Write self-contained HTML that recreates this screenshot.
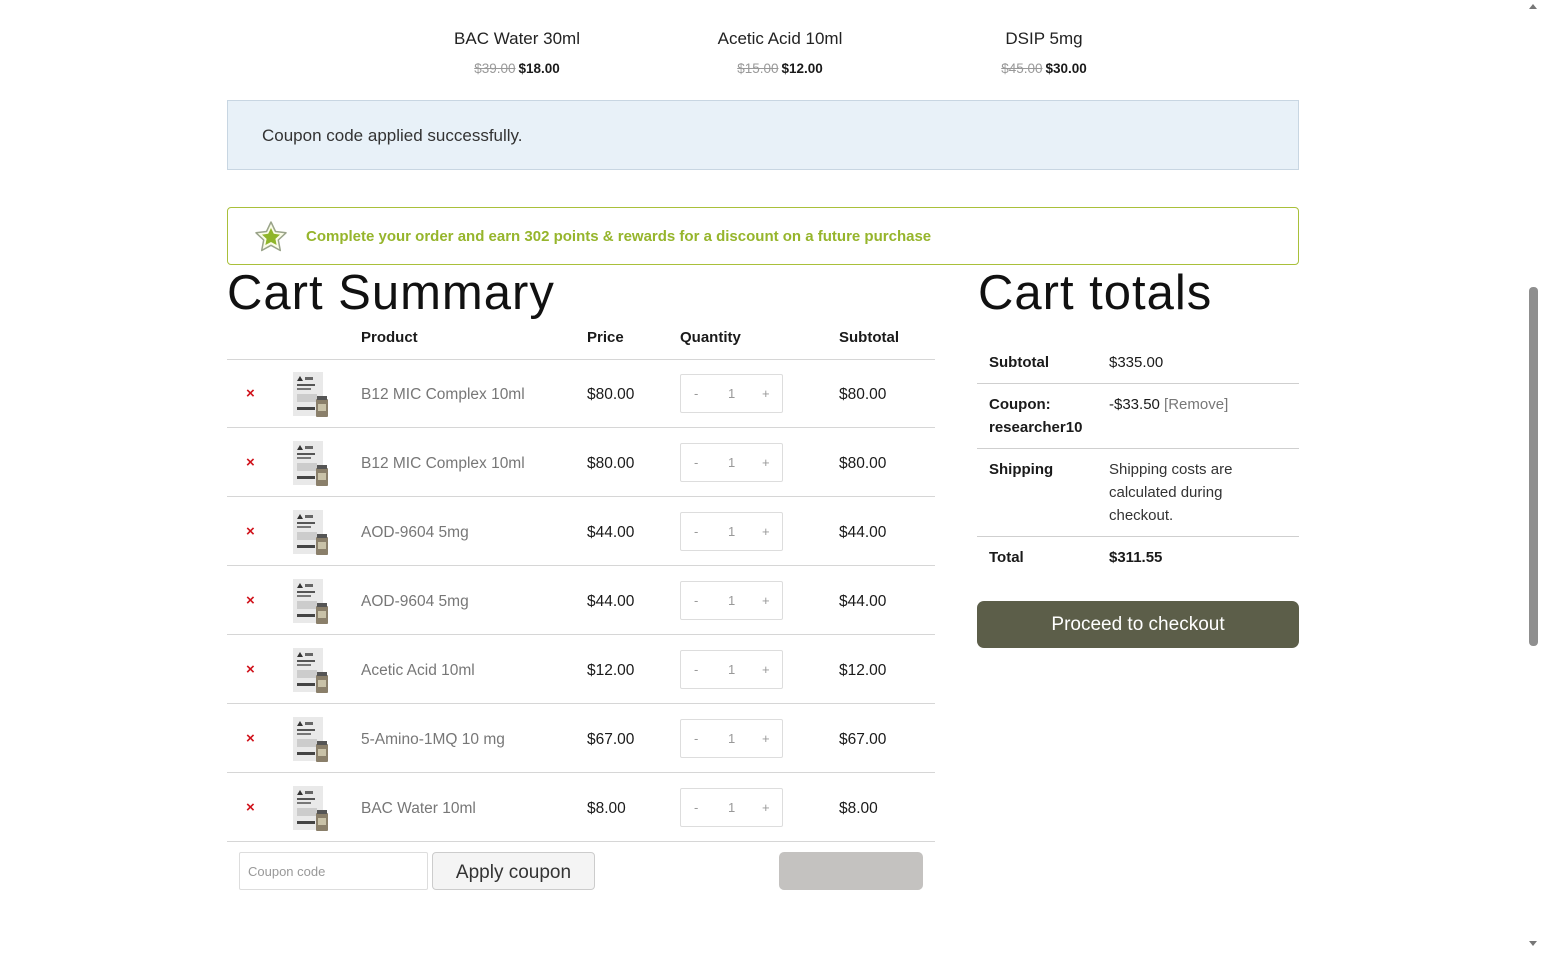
<!DOCTYPE html>
<html><head><meta charset="utf-8">
<style>
*{margin:0;padding:0;box-sizing:border-box}
html,body{width:1541px;height:953px;overflow:hidden;background:#fff;font-family:"Liberation Sans",sans-serif;color:#1a1a1a}
.abs{position:absolute}
.top{font-size:17px;color:#222;text-align:center;width:200px}
.pr{font-size:13.5px;text-align:center;width:200px;font-weight:bold}
.pr s{color:#999;font-weight:normal;margin-right:3px}
.notice{left:227px;top:100px;width:1072px;height:70px;background:#e8f1f8;border:1px solid #c8d6e2;font-size:17px;color:#333;padding:25px 34px}
.rew{left:227px;top:207px;width:1072px;height:58px;border:1px solid #a9c03a;border-radius:4px}
.rew span{position:absolute;left:78px;top:20px;color:#96b52c;font-weight:bold;font-size:15px}
h1{position:absolute;font-weight:normal;font-size:49px;color:#111;letter-spacing:1px}
.th{font-weight:bold;font-size:15px;top:329px}
.line{height:1px;background:#d6d6d6;left:227px;width:708px}
.row{position:absolute;left:227px;width:708px;height:69px;font-size:15.5px}
.row .x{position:absolute;left:19px;top:26px;color:#d0121b;font-size:15px;font-weight:bold}
.row .img{position:absolute;left:64px;top:12px}
.row .nm{position:absolute;left:134px;top:27px;color:#777}
.row .p{position:absolute;left:360px;top:27px}
.row .q{position:absolute;left:453px;top:15px;width:103px;height:39px;border:1px solid #ddd;border-radius:2px;font-size:13px;color:#999}
.q i{font-style:normal;position:absolute;top:11px}
.row .s{position:absolute;left:612px;top:27px}
.tot{left:977px;width:322px;font-size:15px}
.tl{height:1px;background:#cfcfcf;left:977px;width:322px}
</style></head><body>
<div class="abs top" style="left:417px;top:29px">BAC Water 30ml</div>
<div class="abs pr" style="left:417px;top:61px"><s>$39.00</s>$18.00</div>
<div class="abs top" style="left:680px;top:29px">Acetic Acid 10ml</div>
<div class="abs pr" style="left:680px;top:61px"><s>$15.00</s>$12.00</div>
<div class="abs top" style="left:944px;top:29px">DSIP 5mg</div>
<div class="abs pr" style="left:944px;top:61px"><s>$45.00</s>$30.00</div>

<div class="abs notice">Coupon code applied successfully.</div>
<div class="abs rew">
<svg class="abs" style="left:26px;top:12px" width="34" height="34" viewBox="0 0 34 34"><path d="M17 2 L21.5 11.5 L32 12.8 L24.3 20 L26.3 30.5 L17 25.3 L7.7 30.5 L9.7 20 L2 12.8 L12.5 11.5 Z" fill="#fbfde8" stroke="#9aa48a" stroke-width="1.5" stroke-linejoin="round"/><path d="M17 8 L19.8 13.8 L26 14.6 L21.4 18.9 L22.6 25 L17 22 L11.4 25 L12.6 18.9 L8 14.6 L14.2 13.8 Z" fill="#8fb52a"/></svg>
<span>Complete your order and earn 302 points &amp; rewards for a discount on a future purchase</span></div>

<h1 style="left:227px;top:265px">Cart Summary</h1>
<h1 style="left:978px;top:265px">Cart totals</h1>

<div class="abs th" style="left:361px">Product</div>
<div class="abs th" style="left:587px">Price</div>
<div class="abs th" style="left:680px">Quantity</div>
<div class="abs th" style="left:839px">Subtotal</div>
<div class="abs line" style="top:359px"></div>

<div id="rows"></div>
<script>
var d=[["B12 MIC Complex 10ml","$80.00"],["B12 MIC Complex 10ml","$80.00"],["AOD-9604 5mg","$44.00"],["AOD-9604 5mg","$44.00"],["Acetic Acid 10ml","$12.00"],["5-Amino-1MQ 10 mg","$67.00"],["BAC Water 10ml","$8.00"]];
var h="";
d.forEach(function(r,i){var t=359+i*69;
h+='<div class="row" style="top:'+t+'px"><span class="x">×</span><svg class="img" width="40" height="48" viewBox="0 0 40 48"><rect x="2" y="1" width="30" height="44" fill="#e9e9e9"/><path d="M6 10l3-5 3 5z" fill="#333"/><rect x="14" y="6" width="8" height="3" fill="#666"/><rect x="6" y="13" width="18" height="2" fill="#555"/><rect x="6" y="17" width="14" height="2" fill="#777"/><rect x="6" y="23" width="20" height="8" fill="#ccc"/><rect x="6" y="36" width="18" height="3" fill="#444"/><rect x="25" y="28" width="12" height="18" rx="1" fill="#8a7f6a"/><rect x="26" y="25" width="10" height="4" fill="#555"/><rect x="27" y="33" width="8" height="7" fill="#c9c2a8"/></svg><span class="nm">'+r[0]+'</span><span class="p">'+r[1]+'</span><div class="q"><i style="left:13px">-</i><i style="left:47px">1</i><i style="left:81px">+</i></div><span class="s">'+r[1]+'</span></div><div class="abs line" style="top:'+(t+68)+'px"></div>';});
document.getElementById("rows").innerHTML=h;
</script>

<div class="abs" style="left:239px;top:852px;width:189px;height:38px;border:1px solid #ddd;border-radius:2px;font-size:13px;color:#999;padding:11px 8px">Coupon code</div>
<div class="abs" style="left:432px;top:852px;width:163px;height:38px;border:1px solid #ccc;border-radius:4px;background:#f4f4f4;font-size:19px;color:#333;text-align:center;padding-top:9px">Apply coupon</div>
<div class="abs" style="left:779px;top:852px;width:144px;height:38px;border-radius:5px;background:#c4c2c0"></div>

<div class="abs tot" style="left:989px;top:354px;font-weight:bold">Subtotal</div>
<div class="abs tot" style="left:1109px;top:354px">$335.00</div>
<div class="abs tl" style="top:383px"></div>
<div class="abs tot" style="left:989px;top:393px;font-weight:bold;line-height:23px">Coupon:<br>researcher10</div>
<div class="abs tot" style="left:1109px;top:396px">-$33.50 <span style="color:#777">[Remove]</span></div>
<div class="abs tl" style="top:448px"></div>
<div class="abs tot" style="left:989px;top:461px;font-weight:bold">Shipping</div>
<div class="abs tot" style="left:1109px;top:458px;line-height:23px;width:160px;color:#333">Shipping costs are calculated during checkout.</div>
<div class="abs tl" style="top:536px"></div>
<div class="abs tot" style="left:989px;top:549px;font-weight:bold">Total</div>
<div class="abs tot" style="left:1109px;top:549px;font-weight:bold">$311.55</div>
<div class="abs" style="left:977px;top:601px;width:322px;height:47px;background:#5c5e49;border-radius:7px;color:#fff;font-size:19px;text-align:center;padding-top:13px">Proceed to checkout</div>

<div class="abs" style="left:1527px;top:0;width:14px;height:953px;background:#fff"></div>
<div class="abs" style="left:1529px;top:287px;width:9px;height:359px;background:#8f8f8f;border-radius:4px"></div>
<div class="abs" style="left:1529px;top:4px;width:0;height:0;border-left:4px solid transparent;border-right:4px solid transparent;border-bottom:5px solid #777"></div>
<div class="abs" style="left:1529px;top:941px;width:0;height:0;border-left:4px solid transparent;border-right:4px solid transparent;border-top:5px solid #777"></div>
</body></html>
